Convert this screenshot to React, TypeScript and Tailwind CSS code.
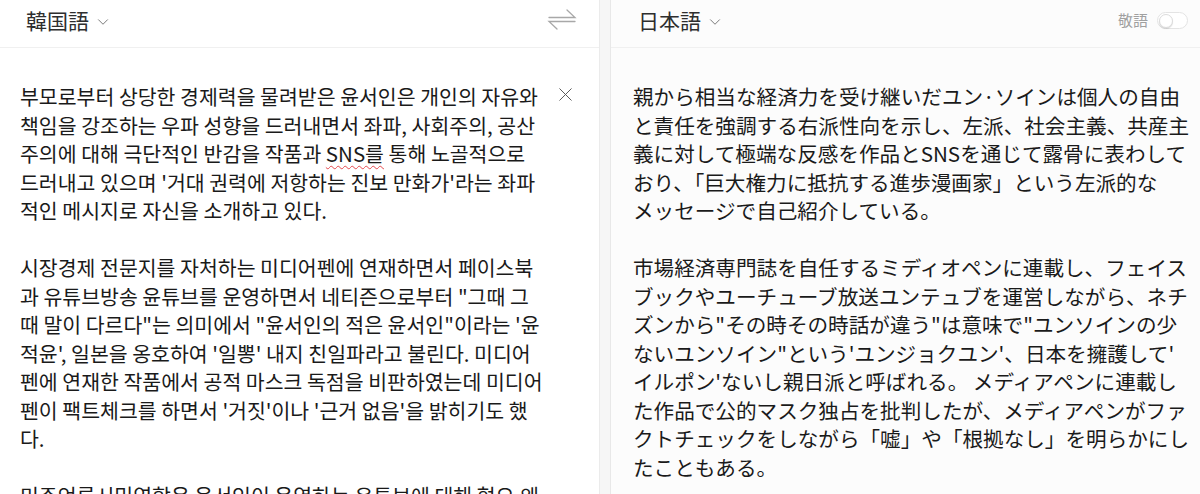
import { ChevronDown, X } from 'lucide-react';

const KO_FONT = "font-['Noto_Sans_CJK_KR','Noto_Sans_CJK_JP',sans-serif]";
const JA_FONT = "font-['Noto_Sans_CJK_JP',sans-serif]";

const koParas: string[][] = [
  [
    '부모로부터 상당한 경제력을 물려받은 윤서인은 개인의 자유와',
    '책임을 강조하는 우파 성향을 드러내면서 좌파, 사회주의, 공산',
    '주의에 대해 극단적인 반감을 작품과 |SNS를| 통해 노골적으로',
    "드러내고 있으며 '거대 권력에 저항하는 진보 만화가'라는 좌파",
    '적인 메시지로 자신을 소개하고 있다.',
  ],
  [
    '시장경제 전문지를 자처하는 미디어펜에 연재하면서 페이스북',
    '과 유튜브방송 윤튜브를 운영하면서 네티즌으로부터 "그때 그',
    '때 말이 다르다"는 의미에서 "윤서인의 적은 윤서인"이라는 \'윤',
    "적윤', 일본을 옹호하여 '일뽕' 내지 친일파라고 불린다. 미디어",
    '펜에 연재한 작품에서 공적 마스크 독점을 비판하였는데 미디어',
    "펜이 팩트체크를 하면서 '거짓'이나 '근거 없음'을 밝히기도 했",
    '다.',
  ],
  ['미주언론시민연합은 윤서인이 운영하는 유튜브에 대해 혐오,왜'],
];

const jaParas: string[][] = [
  [
    '親から相当な経済力を受け継いだユン·ソインは個人の自由',
    'と責任を強調する右派性向を示し、左派、社会主義、共産主',
    '義に対して極端な反感を作品とSNSを通じて露骨に表わして',
    'おり、「巨大権力に抵抗する進歩漫画家」という左派的な',
    'メッセージで自己紹介している。',
  ],
  [
    '市場経済専門誌を自任するミディオペンに連載し、フェイス',
    'ブックやユーチューブ放送ユンテュブを運営しながら、ネチ',
    'ズンから"その時その時話が違う"は意味で"ユンソインの少',
    "ないユンソイン\"という'ユンジョクユン'、日本を擁護して'",
    "イルポン'ないし親日派と呼ばれる。 メディアペンに連載し",
    'た作品で公的マスク独占を批判したが、メディアペンがファ',
    'クトチェックをしながら「嘘」や「根拠なし」を明らかにし',
    'たこともある。',
  ],
];

function Line({ text }: { text: string }) {
  // '|' marks the spell-checked word
  const parts = text.split('|');
  return (
    <span className="block whitespace-nowrap">
      {parts.map((p, i) =>
        i % 2 === 1 ? (
          <span key={i} className="underline decoration-wavy decoration-[#e5484d] decoration-1 underline-offset-[3px]">
            {p}
          </span>
        ) : (
          <span key={i}>{p}</span>
        )
      )}
    </span>
  );
}

function SwapIcon() {
  return (
    <svg width="30" height="24" viewBox="0 0 30 24" fill="none" stroke="#a8a8a8" strokeWidth="1.3" strokeLinecap="round">
      <path d="M2 10.5H28L20 3" />
      <path d="M28 14.5H2L10 22" />
    </svg>
  );
}

export default function App() {
  return (
    <div className="flex h-[494px] w-[1200px] overflow-hidden bg-white text-[#1a1a1a]">
      {/* source */}
      <div className="flex w-[600px] shrink-0 flex-col border-r border-[#ebebeb] bg-white">
        <div className="flex h-[48px] shrink-0 items-center border-b border-[#f0f0f0] pb-[6px] pl-[26px] pr-[22px]">
          <span className={`${JA_FONT} text-[21px] text-[#2e2e2e]`}>韓国語</span>
          <ChevronDown className="ml-[5px] mt-[2px] h-[18px] w-[18px] text-[#777]" strokeWidth={1.3} />
          <div className="ml-auto mt-[-4px]">
            <SwapIcon />
          </div>
        </div>
        <div className="flex shrink-0 pt-[34px] pl-[20px]">
          <div className={`${KO_FONT} flex w-[530px] flex-col gap-[28.5px] text-[20.5px] leading-[28.5px]`}>
            {koParas.map((p, i) => (
              <p key={i}>
                {p.map((l, j) => (
                  <Line key={j} text={l} />
                ))}
              </p>
            ))}
          </div>
          <X className="ml-auto mr-[22px] mt-[1px] h-[23px] w-[23px] text-[#555]" strokeWidth={1} />
        </div>
      </div>

      <div className="w-[10px] shrink-0 bg-[#f6f6f6]" />

      {/* target */}
      <div className="flex flex-1 flex-col border-l border-[#e8e8e8] bg-[#fcfcfc]">
        <div className="flex h-[48px] shrink-0 items-center border-b border-[#f0f0f0] pb-[6px] pl-[27px] pr-[12px]">
          <span className={`${JA_FONT} text-[21px] text-[#2e2e2e]`}>日本語</span>
          <ChevronDown className="ml-[5px] mt-[2px] h-[18px] w-[18px] text-[#777]" strokeWidth={1.3} />
          <span className={`${JA_FONT} ml-auto text-[15px] text-[#a0a0a0]`}>敬語</span>
          <div className="ml-[9px] flex h-[17px] w-[31px] items-center rounded-full border border-[#e4e4e4] bg-white px-[1px]">
            <div className="h-[14px] w-[14px] rounded-full border border-[#dcdcdc] bg-white shadow-[0_1px_1px_rgba(0,0,0,0.12)]" />
          </div>
        </div>
        <div className="shrink-0 pt-[34px] pl-[22px]">
          <div className={`${JA_FONT} flex flex-col gap-[28.5px] text-[20.6px] leading-[28.5px]`}>
            {jaParas.map((p, i) => (
              <p key={i}>
                {p.map((l, j) => (
                  <Line key={j} text={l} />
                ))}
              </p>
            ))}
          </div>
        </div>
      </div>
    </div>
  );
}
